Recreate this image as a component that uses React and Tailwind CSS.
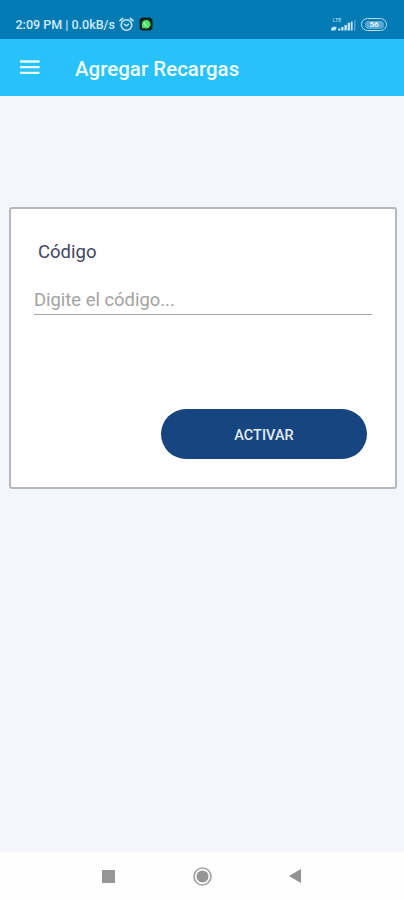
function AlarmIcon() {
  return (
    <svg className="h-[15px] w-[15px]" viewBox="0 0 15 15" fill="none" stroke="#c9e6f5" strokeLinecap="round">
      <circle cx="7.5" cy="8" r="5.3" strokeWidth="1.6" />
      <path d="M1 3.6 3.6 1.5M14 3.6 11.4 1.5" strokeWidth="1.7" />
      <path d="M5.3 7.2 7.4 8.9 9.7 7.2" strokeWidth="1.4" />
    </svg>
  );
}

function ChatBadge() {
  return (
    <svg className="h-[14px] w-[14px]" viewBox="0 0 14 14">
      <rect x="0.5" y="0.5" width="13" height="13" rx="3.5" fill="#17251d" />
      <circle cx="7.2" cy="7.2" r="4.3" fill="#4fe36d" />
      <path d="M3 11.4 3.5 8.6l2.2 2.2z" fill="#4fe36d" />
      <path d="M5 5.3c.3 2 1.7 3.5 3.7 3.9" stroke="#a2f7af" strokeWidth="1.1" fill="none" />
    </svg>
  );
}

function Signal() {
  return (
    <svg className="h-[15px] w-[25px]" viewBox="0 0 25 15" fill="#c3e2f2">
      <text x="1.5" y="5.2" fontSize="5.5" fontFamily="Roboto, sans-serif" textLength="9">LTE</text>
      <path d="M0 13.5v-2l2-1.8h3.5v1.5L4 13.5z" />
      <rect x="7" y="11.5" width="2.4" height="2" />
      <rect x="10.2" y="10" width="2.4" height="3.5" />
      <rect x="13.4" y="8" width="2.4" height="5.5" />
      <rect x="16.6" y="5.8" width="2.4" height="7.7" />
      <rect x="19.8" y="4.5" width="1.8" height="9" />
      <rect x="23" y="3" width="1.5" height="10.5" opacity="0.4" />
    </svg>
  );
}

function Battery() {
  return (
    <div className="flex h-[13px] w-[26px] items-center justify-center rounded-full border-[1.5px] border-[#b5dbef]">
      <div className="flex h-[8px] w-[19px] items-center justify-center rounded-full bg-[#5aa9d3] text-[8px] leading-none font-bold text-[#e6f4fb]">
        56
      </div>
    </div>
  );
}

function MenuIcon() {
  return (
    <svg className="h-[16px] w-[20px]" viewBox="0 0 20 16" fill="none" stroke="#e6f8ff" strokeWidth="2.3">
      <path d="M0 2.500h19.500M0 8.200h19.500M0 13.900h19.500" />
    </svg>
  );
}

export default function App() {
  return (
    <div className="flex h-[900px] w-[404px] flex-col overflow-hidden bg-[#f4f6fb] font-['Roboto',sans-serif]">
      <div className="flex h-[38.5px] shrink-0 items-start bg-[#027bb5] pt-[17px] pr-[17px] pl-[15.5px]">
        <span className="w-[101px] text-[12.5px] leading-[15px] font-medium whitespace-nowrap text-[#d3ebf6]">
          2:09 PM | 0.0kB/s
        </span>
        <div className="ml-[2px]"><AlarmIcon /></div>
        <div className="ml-[5px]"><ChatBadge /></div>
        <div className="ml-auto flex items-center gap-[5px]">
          <Signal />
          <Battery />
        </div>
      </div>

      <header className="flex h-[57.5px] shrink-0 items-center bg-[#27c1fb] pl-[19.5px]">
        <MenuIcon />
        <h1 className="ml-[35.5px] pt-[3px] text-[20.5px] leading-6 font-medium text-[#f2fcff]">Agregar Recargas</h1>
      </header>

      <main className="flex-1 pt-[111px] pr-[7px] pl-[9px]">
        <section className="flex h-[282px] flex-col rounded-[3px] border-2 border-[#b5b8bd] bg-white px-[23px]">
          <label className="mt-[31px] ml-[4px] text-[18.5px] leading-6 text-[#42465f]">Código</label>
          <div className="mt-[21px] flex h-[30px] items-center border-b border-[#a3a5a6] text-[18.4px] text-[#a3a3a3]">
            Digite el código...
          </div>
          <button className="mt-[94px] mr-[5px] h-[50px] w-[206px] self-end rounded-full bg-[#17457f] pt-[3px] text-[14.5px] font-medium text-[#e3ebf5]">
            ACTIVAR
          </button>
        </section>
      </main>

      <nav className="flex h-[48px] shrink-0 items-center bg-[#fefefe] pl-[102px]">
        <div className="size-[13px] bg-[#969696]" />
        <svg className="ml-[78px] size-[19px]" viewBox="0 0 19 19">
          <circle cx="9.5" cy="9.5" r="8.5" fill="none" stroke="#a3a3a3" strokeWidth="1.7" />
          <circle cx="9.500" cy="9.500" r="6" fill="#969696" />
        </svg>
        <svg className="ml-[77px] h-[14px] w-[12px]" viewBox="0 0 12 14" fill="#929292">
          <path d="M12 0v14L0 7z" />
        </svg>
      </nav>
    </div>
  );
}
